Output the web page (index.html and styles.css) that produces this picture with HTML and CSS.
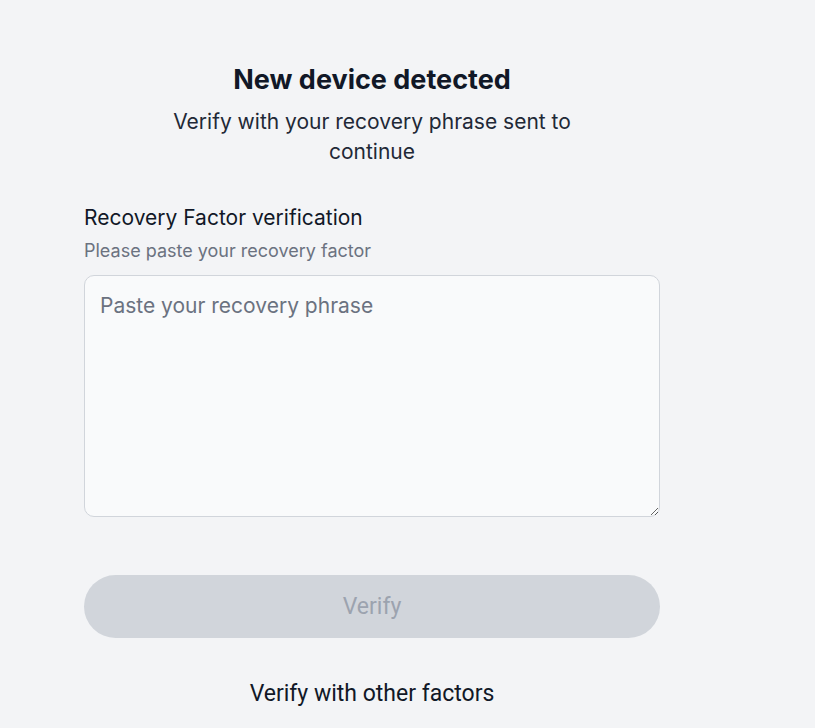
FILE: index.html
```html
<!DOCTYPE html>
<html lang="en">
<head>
<meta charset="utf-8">
<title>New device detected</title>
<link rel="stylesheet" href="styles.css">
</head>
<body>
<main class="page">
  <section class="card">
    <h1 class="title">New device detected</h1>
    <p class="subtitle">Verify with your recovery phrase sent to continue</p>
    <form class="form">
      <label class="label" for="phrase">Recovery Factor verification</label>
      <p class="hint">Please paste your recovery factor</p>
      <textarea id="phrase" class="input" placeholder="Paste your recovery phrase"></textarea>
      <button type="button" class="btn-primary" disabled>Verify</button>
      <button type="button" class="btn-link">Verify with other factors</button>
    </form>
  </section>
</main>
</body>
</html>
```

FILE: styles.css
```css
html, body {
  margin: 0;
  padding: 0;
  background: #f3f4f6;
}
body {
  font-family: Inter, "Noto Sans", sans-serif;
  color: #111827;
}
.page {
  width: 744px;
  box-sizing: border-box;
  padding: 63px 84px 0;
}
.card {
  display: flex;
  flex-direction: column;
}
.title {
  margin: 0;
  font-size: 27px;
  line-height: 34px;
  font-weight: 700;
  text-align: center;
  color: #111827;
}
.subtitle {
  margin: 10px auto 0;
  max-width: 440px;
  font-size: 21px;
  line-height: 30px;
  text-align: center;
  color: #1f2937;
}
.form {
  display: flex;
  flex-direction: column;
  margin-top: 36px;
}
.label {
  font-size: 21px;
  line-height: 30px;
  font-weight: 400;
  color: #111827;
}
.hint {
  margin: 5px 0 0;
  font-size: 18px;
  line-height: 26px;
  color: #6b7280;
}
.input {
  display: block;
  margin-top: 11px;
  height: 242px;
  box-sizing: border-box;
  padding: 16px 15px 15px;
  border: 1px solid #d1d5db;
  border-radius: 10px;
  background: #f9fafb;
  font-family: Inter, "Noto Sans", sans-serif;
  font-size: 21px;
  line-height: 28px;
  color: #111827;
  resize: both;
  outline: none;
}
.input::placeholder {
  color: #6b7280;
}
.btn-primary {
  margin-top: 58px;
  height: 63px;
  border: 0;
  border-radius: 999px;
  background: #d1d5db;
  color: #9ca3af;
  font-family: Roboto, "Liberation Sans", sans-serif;
  font-size: 23px;
}
.btn-link {
  align-self: center;
  margin-top: 42px;
  padding: 0;
  border: 0;
  background: transparent;
  color: #111827;
  font-family: Roboto, "Liberation Sans", sans-serif;
  font-size: 23px;
  line-height: 28px;
}
```
